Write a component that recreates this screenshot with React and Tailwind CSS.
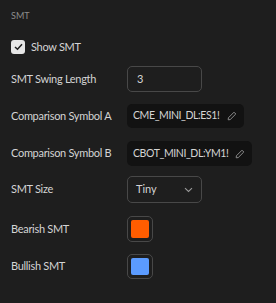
import React from "react";

const Pencil = () => (
  <svg width="10" height="10" viewBox="0 0 10 10" fill="none" stroke="#8a8a8a" strokeWidth="1" className="shrink-0">
    <path d="M7 1.2 L8.8 3 L3.2 8.6 L1.2 8.8 L1.4 6.8 Z" />
  </svg>
);

const Chevron = () => (
  <svg width="9" height="6" viewBox="0 0 9 6" fill="none" stroke="#9a9a9a" strokeWidth="1.1">
    <path d="M1 1.2 L4.5 4.5 L8 1.2" />
  </svg>
);

function Row({ label, children, className }) {
  return (
    <div className={"flex items-center " + (className || "")}>
      <div className="w-[116px] shrink-0 text-[11px] tracking-[-0.3px] text-[#d4d4d4]">{label}</div>
      {children}
    </div>
  );
}

export default function App() {
  return (
    <div
      className="w-[276px] h-[303px] bg-[#1e1e1e] pl-[11px] pt-[10px] flex flex-col"
      style={{ fontFamily: "Lato, 'Liberation Sans', sans-serif" }}
    >
      <div className="h-[12px] leading-[12px] text-[9px] text-[#8c8c8c]">SMT</div>

      <div className="mt-[18px] h-[14px] flex items-center gap-[6px]">
        <div className="w-[14px] h-[14px] rounded-[3px] bg-[#e6e6e6] flex items-center justify-center">
          <svg width="9" height="8" viewBox="0 0 9 8" fill="none" stroke="#1e1e1e" strokeWidth="1.5">
            <path d="M1 4 L3.5 6.3 L8 1.3" />
          </svg>
        </div>
        <span className="text-[11px] tracking-[-0.3px] text-[#d4d4d4]">Show SMT</span>
      </div>

      <Row label="SMT Swing Length" className="mt-[12px] h-[26px]">
        <div className="w-[75px] h-[26px] rounded-[5px] border border-[#484848] flex items-center px-[9px] text-[11px] text-[#d4d4d4]">
          3
        </div>
      </Row>

      <Row label="Comparison Symbol A" className="mt-[12px] h-[24px]">
        <div className="w-[117px] h-[24px] rounded-[5px] bg-[#121212] flex items-center justify-between pl-[6px] pr-[7px] text-[10.5px] tracking-[-0.4px] text-[#d4d4d4]">
          <span className="whitespace-nowrap">CME_MINI_DL:ES1!</span>
          <Pencil />
        </div>
      </Row>

      <Row label="Comparison Symbol B" className="mt-[13px] h-[25px]">
        <div className="w-[125px] h-[25px] rounded-[5px] bg-[#121212] flex items-center justify-between pl-[6px] pr-[7px] text-[10.5px] tracking-[-0.4px] text-[#d4d4d4]">
          <span className="whitespace-nowrap">CBOT_MINI_DL:YM1!</span>
          <Pencil />
        </div>
      </Row>

      <Row label="SMT Size" className="mt-[10px] h-[27px]">
        <div className="w-[75px] h-[27px] rounded-[5px] border border-[#484848] flex items-center justify-between pl-[8px] pr-[8px] text-[11px] text-[#d4d4d4]">
          <span>Tiny</span>
          <Chevron />
        </div>
      </Row>

      <Row label="Bearish SMT" className="mt-[13px] h-[26px]">
        <div className="w-[26px] h-[26px] rounded-[5px] border border-[#484848] p-[3px]">
          <div className="w-full h-full rounded-[2px] bg-[#ff5d00]" />
        </div>
      </Row>

      <Row label="Bullish SMT" className="mt-[12px] h-[25px]">
        <div className="w-[26px] h-[25px] rounded-[5px] border border-[#484848] p-[3px]">
          <div className="w-full h-full rounded-[2px] bg-[#5b9bff]" />
        </div>
      </Row>
    </div>
  );
}
